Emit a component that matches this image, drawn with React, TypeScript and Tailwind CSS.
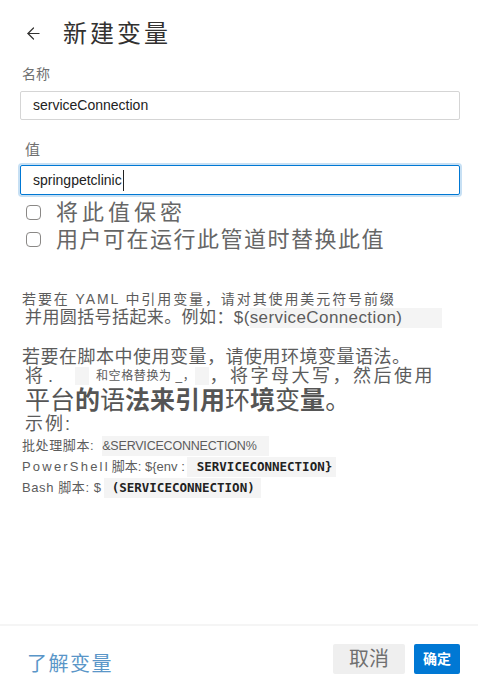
import { ArrowLeft } from 'lucide-react'

const sans = 'font-["Liberation_Sans","Noto_Sans_CJK_SC",sans-serif]'
const mono = 'font-["DejaVu_Sans_Mono","Noto_Sans_CJK_SC",monospace]'

function Check({ label, className }: { label: string; className: string }) {
  return (
    <label className="flex items-center gap-[15px]">
      <span className="w-[15px] h-[15px] rounded-[4px] border border-[#8a8886] bg-white shrink-0" />
      <span className={className}>{label}</span>
    </label>
  )
}

export default function App() {
  return (
    <div className={`w-[478px] h-[690px] bg-white flex flex-col text-[#5c5c5c] ${sans}`}>
      <div className="flex-1 px-[20px]">
        {/* Header */}
        <div className="flex items-center gap-[20px] pt-[17px] h-[50px] pl-[4px]">
          <ArrowLeft className="w-[19px] h-[19px] text-[#323130]" strokeWidth={1.5} />
          <h1 className="text-[24px] leading-[32px] text-[#323130] tracking-[3px]">新建变量</h1>
        </div>

        {/* Name */}
        <div className="mt-[15px] text-[14px] leading-[18px] text-[#707070] pl-[2px]">名称</div>
        <div className="mt-[8px] h-[29px] w-[440px] border border-[#d5d5d5] rounded-[2px] flex items-center pl-[12px] text-[14px] text-[#222]">
          serviceConnection
        </div>

        {/* Value */}
        <div className="mt-[21px] text-[15px] leading-[18px] text-[#707070] pl-[5px]">值</div>
        <div className="mt-[6px] h-[30px] w-[440px] border border-[#0078d4] rounded-[2px] ring-2 ring-[#c7e0f4] flex items-center pl-[12px] text-[14px] text-[#222]">
          springpetclini<span className="border-r border-[#222] pr-[1px]">c</span>
        </div>

        {/* Checkboxes */}
        <div className="mt-[4px] pl-[6px] flex flex-col">
          <Check label="将此值保密" className="text-[22px] leading-[27px] tracking-[4px] text-[#666]" />
          <Check label="用户可在运行此管道时替换此值" className="text-[22px] leading-[27px] tracking-[1.5px] text-[#666]" />
        </div>

        {/* YAML help */}
        <div className="mt-[38px] text-[14px] leading-[16px] pl-[2px] tracking-[1.9px]">
          若要在 YAML 中引用变量，请对其使用美元符号前缀
        </div>
        <div className="mt-[1px] text-[17px] leading-[20px] pl-[5px] flex tracking-[0.4px]">
          <span>并用圆括号括起来。例如：$(</span>
          <span className="bg-[#f4f4f4] pr-[40px]">serviceConnection)</span>
        </div>

        {/* Script help */}
        <div className="mt-[20px] text-[18px] leading-[18px] pl-[2px] tracking-[0.5px]">
          若要在脚本中使用变量，请使用环境变量语法。
        </div>
        <div className="text-[18px] leading-[20px] pl-[5px] flex items-center">
          <span>将 .</span>
          <span className="inline-block w-[14px] h-[18px] bg-[#f4f4f4] ml-[22px]" />
          <span className="text-[12px] ml-[7px] tracking-[0.6px]">和空格替换为 _，</span>
          <span className="inline-block w-[14px] h-[18px] bg-[#f4f4f4]" />
          <span className="tracking-[2.5px]">，将字母大写，然后使用</span>
        </div>
        <div className="text-[25px] leading-[28px] pl-[5px] text-[#555]">
          <span>平台</span><span className="font-bold">的</span>语<span className="font-bold">法来引用</span>环<span className="font-bold">境</span>变<span className="font-bold">量</span>。
        </div>
        <div className="text-[18px] leading-[20px] pl-[5px] tracking-[2px]">示例:</div>

        {/* Examples */}
        <div className="mt-[2px] flex flex-col gap-[1px] text-[13px] leading-[20px] pl-[2px]">
          <div className="flex">
            <span className="tracking-[0.6px]">批处理脚本: </span>
            <span className="bg-[#f4f4f4] pr-[12px] ml-[8px] text-[12.5px] tracking-[-0.2px]">&amp;SERVICECONNECTION%</span>
          </div>
          <div className="flex">
            <span className="tracking-[2.2px]">PowerShell</span>
            <span className="ml-[2px]">脚本: ${'{'}env :</span>
            <span className={`bg-[#f4f4f4] pl-[10px] pr-[4px] ml-[2px] text-[#222] font-bold ${mono} text-[12.5px]`}>
              SERVICECONNECTION{'}'}
            </span>
          </div>
          <div className="flex">
            <span className="tracking-[0.6px]">Bash 脚本: $</span>
            <span className={`bg-[#f4f4f4] pl-[8px] pr-[6px] text-[#222] font-bold ${mono} text-[12.5px] ml-[2px]`}>
              (SERVICECONNECTION)
            </span>
          </div>
        </div>
      </div>

      {/* Footer */}
      <div className="h-[66px] border-t-2 border-[#f5f5f5] flex items-center justify-between pl-[27px] pr-[18px]">
        <a className="text-[20px] text-[#5a96c8] tracking-[1.5px] mt-[12px]">了解变量</a>
        <div className="flex gap-[9px] mt-[2px]">
          <button className="w-[72px] h-[30px] bg-[#efefef] rounded-[2px] text-[20px] text-[#707070]">取消</button>
          <button className="w-[46px] h-[30px] bg-[#0078d4] rounded-[2px] text-[14px] text-white font-bold">确定</button>
        </div>
      </div>
    </div>
  )
}
